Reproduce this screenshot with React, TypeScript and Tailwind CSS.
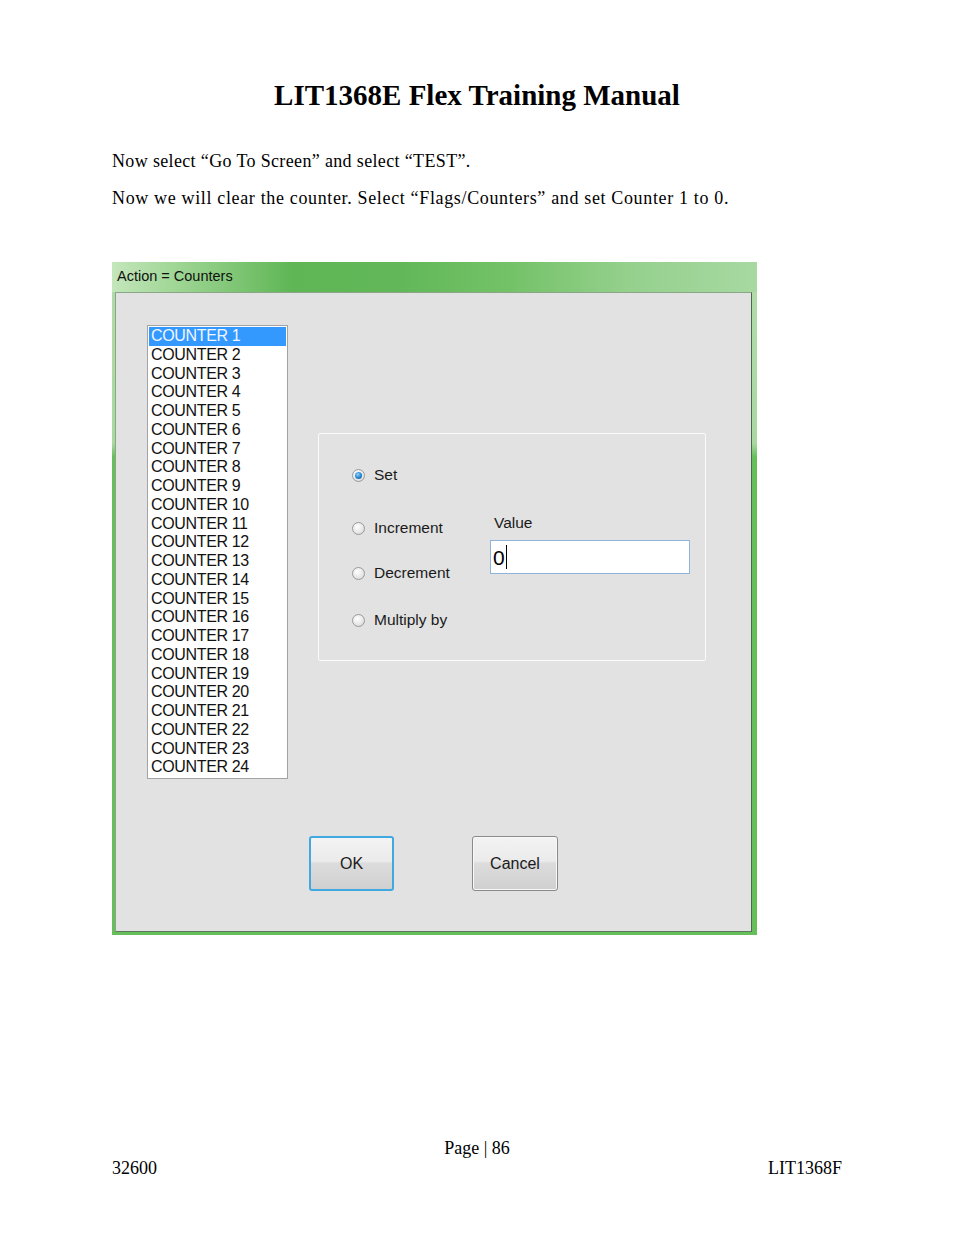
import React from "react";

const counters = Array.from({ length: 24 }, (_, i) => `COUNTER ${i + 1}`);

function Radio({ checked, label }: { checked?: boolean; label: string }) {
  return (
    <div className="flex items-center h-[20px]">
      <div className="w-[13px] h-[13px] rounded-full border border-[#9a9a9a] bg-[radial-gradient(circle_at_40%_35%,#ffffff_0%,#e8e8e8_55%,#cfcfcf_100%)] flex items-center justify-center">
        {checked && (
          <div className="w-[7px] h-[7px] rounded-full bg-[radial-gradient(circle_at_40%_35%,#8fd3ff_0%,#2a8ad0_50%,#0d4f8a_100%)]" />
        )}
      </div>
      <span className="ml-[9px] text-[15.5px] text-[#1a1a1a]">{label}</span>
    </div>
  );
}

export default function App() {
  return (
    <div className="w-[954px] h-[1235px] bg-white flex flex-col" style={{ fontFamily: '"Liberation Serif", serif' }}>
      <div className="mt-[78px] h-[34px] leading-[34px] text-center text-[29px] font-bold text-black">
        LIT1368E Flex Training Manual
      </div>
      <div className="mt-[37px] ml-[112px] h-[24px] leading-[24px] text-[18px] tracking-[0.35px] text-black">
        Now select “Go To Screen” and select “TEST”.
      </div>
      <div className="mt-[13px] ml-[112px] h-[24px] leading-[24px] text-[18px] tracking-[0.65px] text-black">
        Now we will clear the counter. Select “Flags/Counters” and set Counter 1 to 0.
      </div>

      {/* Dialog */}
      <div
        className="mt-[52px] ml-[112px] w-[645px] h-[673px] flex flex-col bg-[linear-gradient(to_bottom,#b2dcaa_0%,#a9d8a1_27%,#66bf5b_29%,#66bf5b_100%)]"
        style={{ fontFamily: '"Liberation Sans", Arial, sans-serif' }}
      >
        <div className="h-[30px] flex items-center pl-[5px] bg-[linear-gradient(to_right,#c4e6bb_0%,#a6d99c_8%,#5fb655_28%,#62b858_45%,#74c268_62%,#95d08d_80%,#a7d9a1_100%)]">
          <span className="text-[14.5px] text-[#111]">Action = Counters</span>
        </div>
        <div className="flex-1 ml-[3px] mr-[5px] mb-[3px] bg-[#e2e2e2] border border-t-[#8aa587] border-l-[#8aa587] border-r-[#4b6a4b] border-b-[#5d785c] flex flex-col">
          <div className="flex">
            {/* Listbox */}
            <div className="ml-[31px] mt-[32px] w-[141px] h-[454px] border border-[#a3a3a3] bg-white p-[1px] flex flex-col">
              {counters.map((c, i) => (
                <div
                  key={c}
                  className={`h-[18.75px] leading-[18.75px] pl-[2px] text-[16px] tracking-[-0.35px] ${
                    i === 0 ? "bg-[#3399ff] text-[#f0f6ff]" : "text-[#111]"
                  }`}
                >
                  {c}
                </div>
              ))}
            </div>

            {/* Group box */}
            <div className="ml-[30px] mt-[140px] w-[388px] h-[228px] border border-[#fbfbfb] rounded-[2px] flex">
              <div className="w-[171px] pl-[33px] flex flex-col">
                <div className="mt-[31px]">
                  <Radio checked label="Set" />
                </div>
                <div className="mt-[33px]">
                  <Radio label="Increment" />
                </div>
                <div className="mt-[25px]">
                  <Radio label="Decrement" />
                </div>
                <div className="mt-[27px]">
                  <Radio label="Multiply by" />
                </div>
              </div>
              <div className="flex flex-col pt-[79px]">
                <div className="h-[20px] leading-[20px] pl-[4px] text-[15.5px] text-[#1a1a1a]">Value</div>
                <div className="mt-[7px] w-[200px] h-[34px] bg-white border border-[#8fb4dc] flex items-center pl-[2px]">
                  <span className="text-[21px] text-black leading-none">0</span>
                  <span className="w-[1px] h-[24px] bg-black ml-[1px]" />
                </div>
              </div>
            </div>
          </div>

          {/* Buttons */}
          <div className="flex ml-[193px] mt-[57px]">
            <button className="w-[85px] h-[55px] rounded-[3px] border-2 border-[#3fa9e0] bg-[linear-gradient(to_bottom,#f3f3f3_0%,#ebebeb_45%,#dcdcdc_50%,#d0d0d0_100%)] text-[16px] text-[#1a1a1a]">
              OK
            </button>
            <button className="ml-[78px] w-[86px] h-[55px] rounded-[3px] border border-[#8a8a8a] bg-[linear-gradient(to_bottom,#f3f3f3_0%,#ebebeb_45%,#dcdcdc_50%,#d0d0d0_100%)] text-[16px] text-[#1a1a1a] shadow-[inset_0_0_0_1px_#f8f8f8]">
              Cancel
            </button>
          </div>
        </div>
      </div>

      <div className="mt-[203px] h-[20px] leading-[20px] text-center text-[18px] text-black">Page | 86</div>
      <div className="flex justify-between px-[112px] h-[20px] leading-[20px] text-[18px] text-black">
        <span>32600</span>
        <span>LIT1368F</span>
      </div>
    </div>
  );
}
